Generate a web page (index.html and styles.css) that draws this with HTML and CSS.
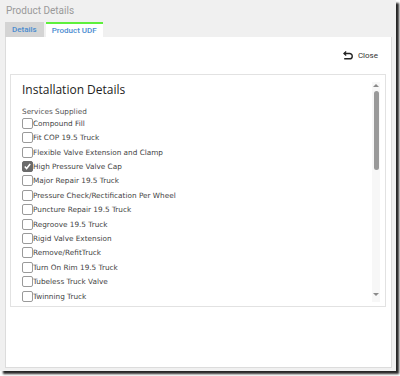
FILE: index.html
```html
<!DOCTYPE html>
<html>
<head>
<meta charset="utf-8">
<link rel="stylesheet" href="styles.css">
</head>
<body>
<div class="dialog">
  <div class="title">Product Details</div>
  <div class="tabs">
    <div class="tab">Details</div>
    <div class="tab active">Product UDF</div>
  </div>
  <div class="panel">
    <div class="toolbar">
      <div class="close">
        <svg class="close-icon" width="10" height="9" viewBox="0 0 10 9">
          <path d="M3.2 0.6 L1 2.5 L3.2 4.4" fill="none" stroke="#222" stroke-width="1.3"/>
          <path d="M1.2 2.5 H6.6 A2.6 2.6 0 0 1 6.6 7.8 H1.2" fill="none" stroke="#222" stroke-width="1.4"/>
        </svg>
        <span>Close</span>
      </div>
    </div>
    <div class="box">
      <div class="scroll">
        <div class="content">
          <div class="heading">Installation Details</div>
          <div class="label">Services Supplied</div>
          <div class="list">
            <div class="row"><span class="cb"></span>Compound Fill</div>
            <div class="row"><span class="cb"></span>Fit COP 19.5 Truck</div>
            <div class="row"><span class="cb"></span>Flexible Valve Extension and Clamp</div>
            <div class="row"><span class="cb checked"><svg width="11" height="11" viewBox="0 0 11 11"><path d="M2.2 5.6 L4.4 8 L8.8 2.4" fill="none" stroke="#fff" stroke-width="1.8"/></svg></span>High Pressure Valve Cap</div>
            <div class="row"><span class="cb"></span>Major Repair 19.5 Truck</div>
            <div class="row"><span class="cb"></span>Pressure Check/Rectification Per Wheel</div>
            <div class="row"><span class="cb"></span>Puncture Repair 19.5 Truck</div>
            <div class="row"><span class="cb"></span>Regroove 19.5 Truck</div>
            <div class="row"><span class="cb"></span>Rigid Valve Extension</div>
            <div class="row"><span class="cb"></span>Remove/RefitTruck</div>
            <div class="row"><span class="cb"></span>Turn On Rim 19.5 Truck</div>
            <div class="row"><span class="cb"></span>Tubeless Truck Valve</div>
            <div class="row"><span class="cb"></span>Twinning Truck</div>
          </div>
        </div>
        <div class="scrollbar">
          <div class="arrow up"></div>
          <div class="track"><div class="thumb"></div></div>
          <div class="arrow down"></div>
        </div>
      </div>
    </div>
  </div>
</div>
</body>
</html>
```

FILE: styles.css
```css
html, body {
  margin: 0;
  padding: 0;
  background: #ffffff;
}
body {
  width: 400px;
  height: 376px;
  overflow: hidden;
  font-family: "Open Sans", "Noto Sans", sans-serif;
}
.dialog {
  width: 396px;
  height: 371px;
  background: #f0f0f0;
  box-shadow: 3px 3px 2px rgba(0, 0, 0, 0.85);
  box-sizing: border-box;
  padding: 0 4px 0 5px;
  display: flex;
  flex-direction: column;
}
.title {
  font-family: Roboto, sans-serif;
  font-size: 10px;
  color: #9a9a9a;
  line-height: 14px;
  padding: 4px 0 0 1px;
  height: 19px;
  box-sizing: border-box;
}
.tabs {
  display: flex;
  gap: 2px;
  height: 15px;
  margin-top: 3px;
}
.tab {
  font-family: Roboto, sans-serif;
  font-size: 8px;
  font-weight: 500;
  color: #4a8cd0;
  background: #d4d4d4;
  padding: 0 7px 0 7px;
  line-height: 15px;
  box-sizing: border-box;
}
.tab.active {
  background: #ffffff;
  border-top: 2px solid #5ef03c;
  line-height: 13px;
  padding: 0 6px;
}
.panel {
  flex: 1;
  background: #ffffff;
  border: 1px solid #dcdcdc;
  border-top: none;
  margin-bottom: 3px;
  box-sizing: border-box;
  display: flex;
  flex-direction: column;
  padding: 0 5px 0 4px;
}
.toolbar {
  height: 37px;
  display: flex;
  justify-content: flex-end;
  align-items: flex-start;
  padding-top: 12px;
  box-sizing: border-box;
}
.close {
  display: flex;
  align-items: center;
  gap: 5px;
  font-family: Roboto, sans-serif;
  font-size: 8px;
  color: #333333;
  margin-right: 8px;
  height: 12px;
}
.close-icon {
  display: block;
}
.box {
  height: 233px;
  border: 1px solid #e2e2e2;
  box-sizing: border-box;
  padding: 7px 5px 4px 11px;
}
.scroll {
  display: flex;
  height: 100%;
}
.content {
  flex: 1;
  overflow: hidden;
}
.heading {
  font-size: 12px;
  line-height: 16px;
  color: #222222;
}
.label {
  font-family: "DejaVu Sans", sans-serif;
  font-size: 7.3px;
  line-height: 9px;
  color: #555555;
  margin-top: 9px;
}
.row {
  display: flex;
  align-items: center;
  height: 14.42px;
  font-family: "DejaVu Sans", sans-serif;
  font-size: 7.3px;
  color: #444444;
}
.cb {
  width: 11px;
  height: 11px;
  border: 1px solid #9a9a9a;
  border-radius: 2px;
  box-sizing: border-box;
  background: #ffffff;
  flex: none;
  display: flex;
  align-items: center;
  justify-content: center;
}
.cb.checked {
  background: #6b6b6b;
  border-color: #6b6b6b;
}
.cb.checked svg {
  display: block;
}
.scrollbar {
  width: 8px;
  background: #f7f7f7;
  display: flex;
  flex-direction: column;
  align-items: center;
  flex: none;
}
.arrow {
  width: 0;
  height: 0;
  border-left: 3px solid transparent;
  border-right: 3px solid transparent;
  margin: 2px 0;
}
.arrow.up {
  border-bottom: 3px solid #8a8a8a;
}
.arrow.down {
  border-top: 3px solid #8a8a8a;
  margin-bottom: 6px;
}
.track {
  flex: 1;
  width: 100%;
  display: flex;
  justify-content: center;
  padding-top: 2px;
}
.thumb {
  width: 5px;
  height: 79px;
  background: #999999;
  border-radius: 3px;
}
```
